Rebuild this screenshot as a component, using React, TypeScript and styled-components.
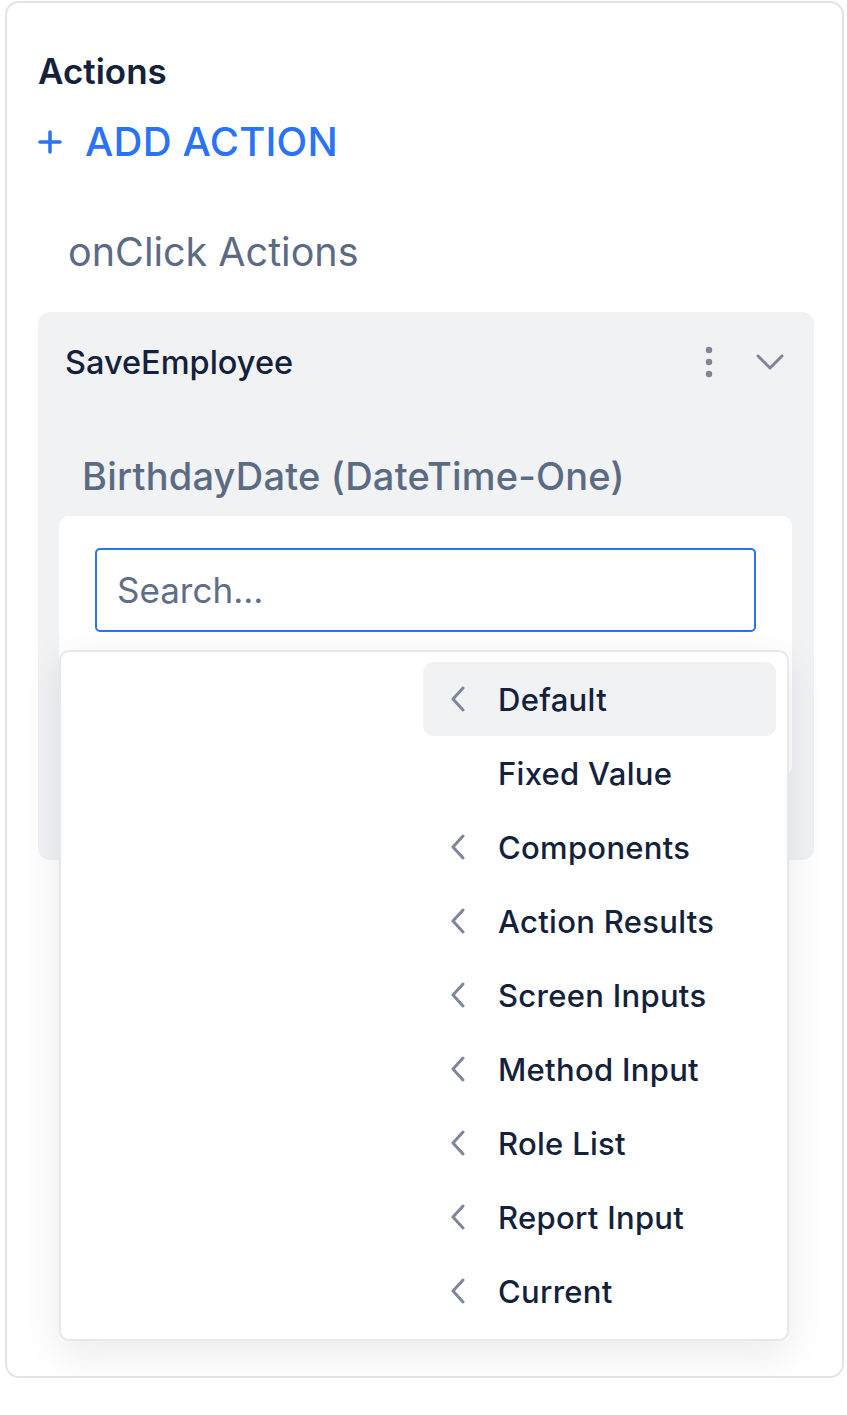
import React from "react";
import styled, { createGlobalStyle } from "styled-components";

const GlobalStyle = createGlobalStyle`
  html, body {
    margin: 0;
    padding: 0;
    background: #ffffff;
  }
  body {
    font-family: Inter, "Noto Sans", sans-serif;
    -webkit-font-smoothing: antialiased;
  }
`;

const Page = styled.div`
  padding: 1px 3px 0 5px;
`;

const Card = styled.div`
  box-sizing: border-box;
  width: 839px;
  height: 1377px;
  border: 2px solid #e1e4e8;
  border-radius: 14px;
  padding: 46px 30px 0 31px;
  background: #ffffff;
`;

const Title = styled.h2`
  margin: 0;
  font-size: 35px;
  line-height: 44px;
  font-weight: 600;
  color: #14213a;
`;

const AddButton = styled.button`
  display: flex;
  align-items: center;
  gap: 23px;
  margin: 19px 0 0 0;
  padding: 0;
  border: none;
  background: none;
  font-family: inherit;
  font-size: 40px;
  line-height: 60px;
  font-weight: 500;
  color: #2a72f6;
  letter-spacing: 0.2px;
  cursor: pointer;
`;

const Section = styled.div`
  margin: 55px 0 0 30px;
  font-size: 39.5px;
  line-height: 50px;
  font-weight: 400;
  color: #5c6b84;
`;

const Panel = styled.div`
  position: relative;
  margin-top: 35px;
  width: 776px;
  height: 548px;
  box-sizing: border-box;
  background: #f0f2f4;
  border-radius: 12px;
  padding: 0 0 0 21px;
`;

const PanelHeader = styled.div`
  display: flex;
  align-items: center;
  height: 100px;
  padding: 0 29px 0 6px;
`;

const ActionName = styled.div`
  flex: 1;
  font-size: 32.5px;
  font-weight: 500;
  color: #14213a;
`;

const IconButton = styled.span<{ $gap?: number }>`
  display: flex;
  align-items: center;
  justify-content: center;
  margin-left: ${(p) => p.$gap ?? 0}px;
  color: #7d8797;
`;

const FieldLabel = styled.div`
  padding: 39px 0 0 23px;
  font-size: 38px;
  line-height: 50px;
  font-weight: 500;
  color: #5c6b84;
  letter-spacing: 0.2px;
`;

const ValueBox = styled.div`
  position: relative;
  margin-top: 15px;
  width: 733px;
  height: 260px;
  box-sizing: border-box;
  background: #ffffff;
  border-radius: 10px;
  padding: 32px 36px 0 36px;
`;

const SearchInput = styled.input`
  box-sizing: border-box;
  width: 661px;
  height: 84px;
  border: 2px solid #2a72f6;
  border-radius: 5px;
  outline: none;
  padding: 0 20px;
  font-family: inherit;
  font-size: 35px;
  color: #14213a;
  background: #ffffff;
  &::placeholder {
    color: #5f6e87;
  }
`;

const Menu = styled.div`
  position: absolute;
  left: 0;
  top: 134px;
  width: 730px;
  height: 691px;
  box-sizing: border-box;
  display: flex;
  justify-content: flex-end;
  padding: 10px 11px 0 0;
  background: #ffffff;
  border: 2px solid #e6e8eb;
  border-radius: 10px;
  box-shadow: 0 12px 40px rgba(15, 23, 42, 0.09);
`;

const MenuList = styled.div`
  display: flex;
  flex-direction: column;
  width: 353px;
`;

const MenuItem = styled.div<{ $active?: boolean }>`
  display: flex;
  align-items: center;
  height: 74px;
  border-radius: 10px;
  background: ${(p) => (p.$active ? "#f0f2f4" : "transparent")};
  font-size: 31px;
  font-weight: 500;
  color: #14213a;
  letter-spacing: 0.3px;
`;

const Chevron = styled.span`
  display: flex;
  align-items: center;
  justify-content: center;
  width: 75px;
  padding-right: 6px;
  box-sizing: border-box;
  color: #7d8797;
`;

const items: { label: string; sub: boolean }[] = [
  { label: "Default", sub: true },
  { label: "Fixed Value", sub: false },
  { label: "Components", sub: true },
  { label: "Action Results", sub: true },
  { label: "Screen Inputs", sub: true },
  { label: "Method Input", sub: true },
  { label: "Role List", sub: true },
  { label: "Report Input", sub: true },
  { label: "Current", sub: true },
];

function ChevronLeft() {
  return (
    <svg width="16" height="26" viewBox="0 0 16 26" fill="none">
      <path d="M13 2 L3 13 L13 24" stroke="currentColor" strokeWidth="3" strokeLinecap="round" strokeLinejoin="round" />
    </svg>
  );
}

export default function App() {
  return (
    <Page>
      <GlobalStyle />
      <Card>
        <Title>Actions</Title>
        <AddButton>
          <svg width="24" height="24" viewBox="0 0 24 24" fill="none">
            <path d="M12 2 V22 M2 12 H22" stroke="currentColor" strokeWidth="3.5" strokeLinecap="round" />
          </svg>
          ADD ACTION
        </AddButton>
        <Section>onClick Actions</Section>
        <Panel>
          <PanelHeader>
            <ActionName>SaveEmployee</ActionName>
            <IconButton>
              <svg width="8" height="32" viewBox="0 0 8 32" fill="currentColor">
                <circle cx="4" cy="4" r="3.2" />
                <circle cx="4" cy="16" r="3.2" />
                <circle cx="4" cy="28" r="3.2" />
              </svg>
            </IconButton>
            <IconButton $gap={42}>
              <svg width="30" height="20" viewBox="0 0 30 20" fill="none">
                <path d="M3 4 L15 16 L27 4" stroke="currentColor" strokeWidth="3" strokeLinecap="round" strokeLinejoin="round" />
              </svg>
            </IconButton>
          </PanelHeader>
          <FieldLabel>BirthdayDate (DateTime-One)</FieldLabel>
          <ValueBox>
            <SearchInput placeholder="Search..." />
            <Menu>
              <MenuList>
                {items.map((it, i) => (
                  <MenuItem key={it.label} $active={i === 0}>
                    <Chevron>{it.sub ? <ChevronLeft /> : null}</Chevron>
                    {it.label}
                  </MenuItem>
                ))}
              </MenuList>
            </Menu>
          </ValueBox>
        </Panel>
      </Card>
    </Page>
  );
}
